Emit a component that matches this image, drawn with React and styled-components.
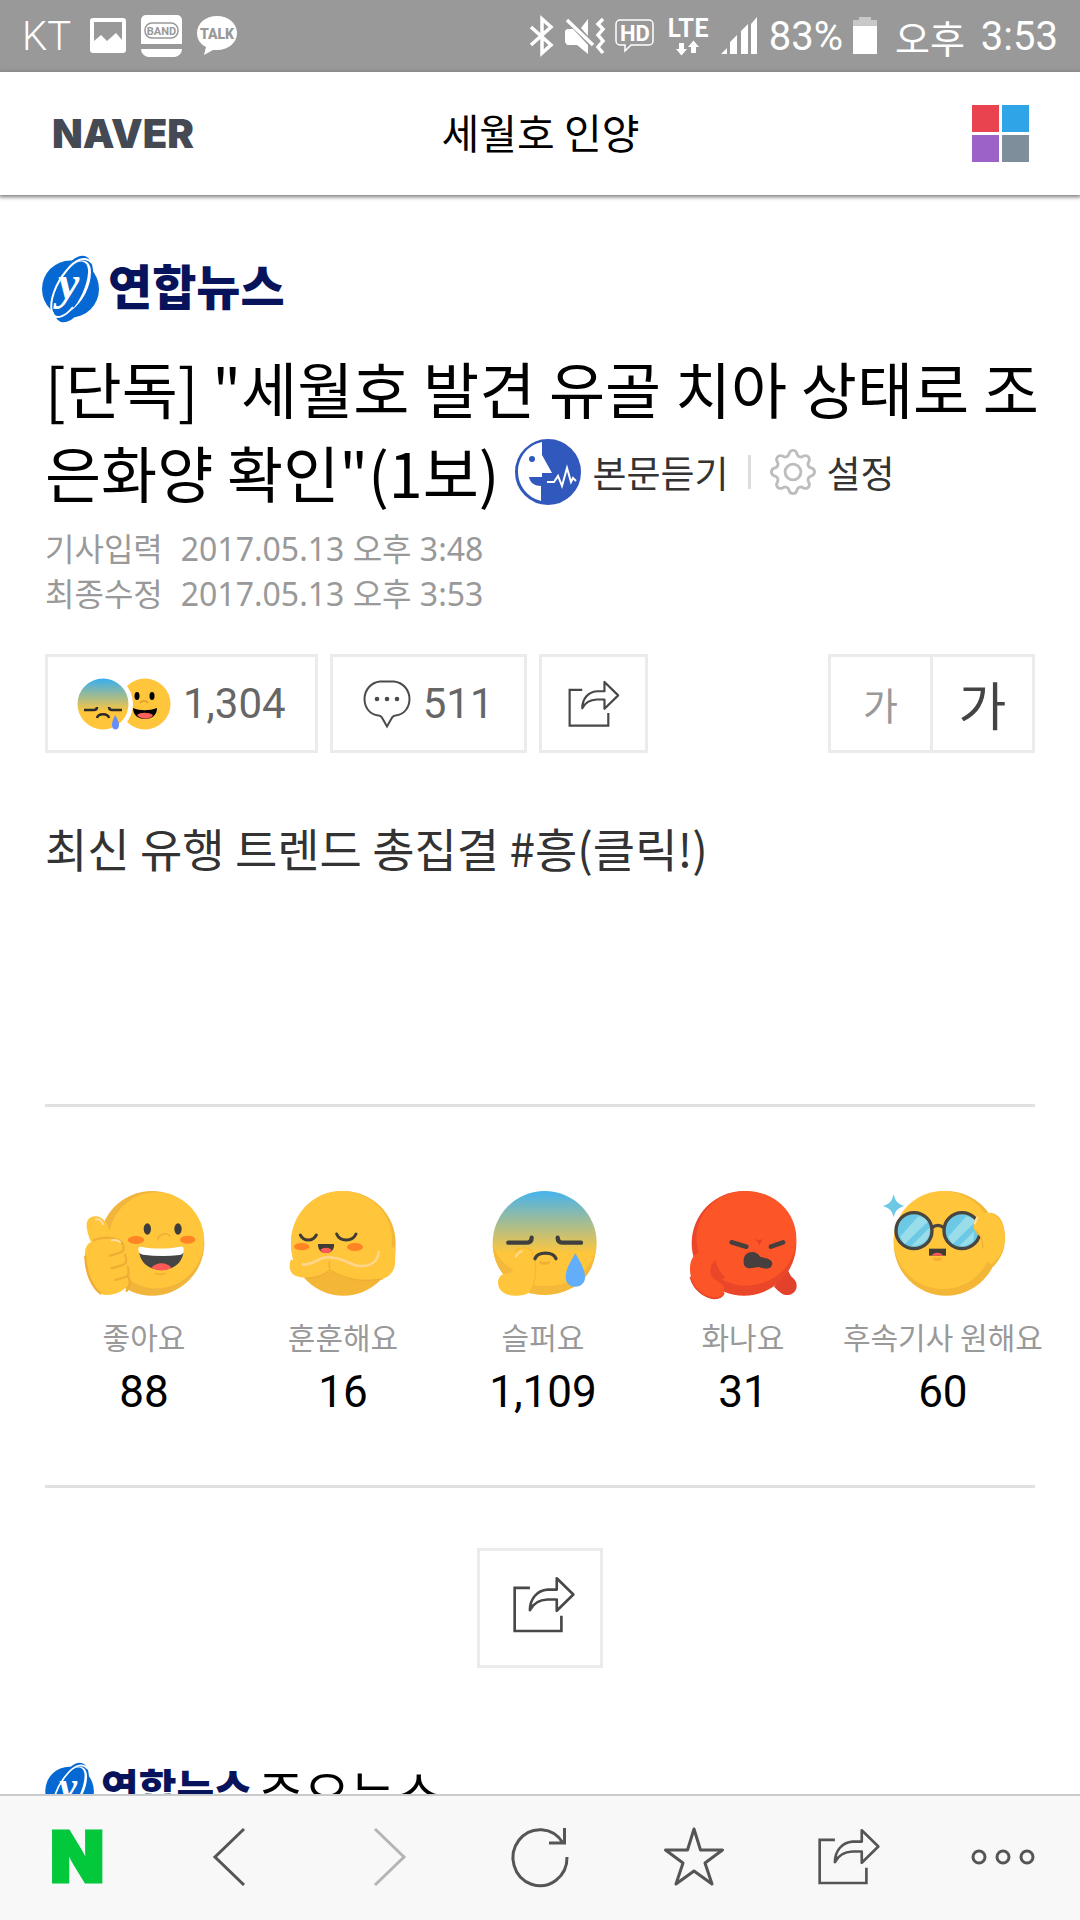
import React from "react";
import styled, { createGlobalStyle } from "styled-components";
import { BsGear } from "react-icons/bs";

const GlobalStyle = createGlobalStyle`
    * {
        box-sizing: border-box;
    }
    body {
        margin: 0;
        background: #fff;
        color: #000;
        font-family: "Noto Sans CJK KR", "Noto Sans", sans-serif;
    }
    button {
        font: inherit;
        color: inherit;
        background: none;
        border: 0;
        padding: 0;
        cursor: pointer;
    }
    a {
        color: inherit;
        text-decoration: none;
    }
    h1, h2, p, ul, dl, dd {
        margin: 0;
        padding: 0;
        font-weight: 400;
    }
    svg {
        display: block;
        flex: none;
        overflow: visible;
    }
`;

/* ---------- status bar icons ---------- */

const PictureIcon = () => (
    <svg width="36" height="36" viewBox="0 0 36 36">
        <path
            fill="#fff"
            fillRule="evenodd"
            d="M3 0h30a3 3 0 0 1 3 3v29a3 3 0 0 1-3 3H3a3 3 0 0 1-3-3V3a3 3 0 0 1 3-3Zm1 4v19l7-6 6 6 9-8 6 7V4Z"
        />
    </svg>
);

const BandIcon = () => (
    <svg width="41" height="42" viewBox="0 0 41 42">
        <path fill="#fff" d="M5 0h31a5 5 0 0 1 5 5v24H0V5a5 5 0 0 1 5-5ZM0 34h41a8 8 0 0 1-7 8H7a8 8 0 0 1-7-8Z" />
        <rect x="4" y="8" width="33" height="15" rx="7" fill="none" stroke="#999" strokeWidth="1.5" />
        <text x="20.5" y="19.5" textAnchor="middle" fill="#999" fontFamily="Roboto" fontWeight="700" fontSize="11">
            BAND
        </text>
    </svg>
);

const TalkIcon = () => (
    <svg width="40" height="40" viewBox="0 0 40 40">
        <path fill="#fff" d="M20 0c11 0 20 7 20 17s-9 17-20 17h-4l-9 5 2-8C3 28 0 23 0 17 0 7 9 0 20 0Z" />
        <text x="20" y="22.5" textAnchor="middle" fill="#999" fontFamily="Roboto" fontWeight="900" fontSize="14">
            TALK
        </text>
    </svg>
);

const BluetoothIcon = () => (
    <svg width="26" height="40" viewBox="0 0 26 40" fill="none" stroke="#fff" strokeWidth="3.5">
        <path d="m2 11 20 18-9 8V3l9 8L2 29" />
    </svg>
);

const MuteIcon = () => (
    <svg width="40" height="38" viewBox="0 0 40 38">
        <path fill="#fff" d="M2 12h6l15 16v9l-11-9H2l-2-3V14ZM16 11l7-9v17Z" />
        <path d="M2 3l26 25M38 2l-5 5 5 5-5 6 5 6-5 6 5 6" fill="none" stroke="#fff" strokeWidth="3.5" />
    </svg>
);

const HdIcon = () => (
    <svg width="40" height="36" viewBox="0 0 40 36">
        <path
            d="M5 2h29a4 4 0 0 1 4 4v17a4 4 0 0 1-4 4H16l-6 6v-6H5a4 4 0 0 1-4-4V6a4 4 0 0 1 4-4Z"
            fill="none"
            stroke="#fff"
            strokeWidth="1.5"
        />
        <text x="20" y="22.5" textAnchor="middle" fill="#fff" fontFamily="Roboto" fontWeight="700" fontSize="22">
            HD
        </text>
    </svg>
);

const LteIcon = () => (
    <svg width="46" height="42" viewBox="0 0 46 42">
        <text x="23" y="22" textAnchor="middle" fill="#fff" fontFamily="Lato" fontWeight="700" fontSize="26">
            LTE
        </text>
        <path fill="#fff" d="M14 28h5v6h3l-5.500 6.500L11 34h3ZM26 38v-6h-3l5.500-6.500L34 32h-3v6Z" />
    </svg>
);

const SignalIcon = () => (
    <svg width="38" height="38" viewBox="0 0 38 38" fill="#fff">
        <path d="M0 37l6-6v6ZM9 37V25l7-7v19ZM20 37V14l7-7v30ZM30 37V7l6-7v37Z" />
    </svg>
);

const BatteryIcon = () => (
    <svg width="24" height="38" viewBox="0 0 24 38">
        <path fill="#c8c8c8" d="M6 0h12v3h6v7H0V3h6Z" />
        <path fill="#fff" d="M0 9h24v28H0Z" />
    </svg>
);

/* ---------- page icons ---------- */

const Globe = ({ width = 58, height = 68 }) => (
    <svg width={width} height={height} viewBox="0 0 58 68">
        <circle cx="28.500" cy="34" r="28.500" fill="#0568d3" />
        <ellipse cx="31" cy="34" rx="17" ry="35" transform="rotate(21 31 34)" fill="#0568d3" />
        <path
            d="M50 8C43 0 33 5 25 15 13 29 7 47 10 57c3 9 13 5 21-5"
            fill="none"
            stroke="#fff"
            strokeWidth="2"
        />
        <path d="M32 9c7-5 15-3 14 9-1 13-8 28-17 38 12-9 20-25 20-39 0-11-8-15-17-8Z" fill="#fff" />
        <text x="16" y="44" fill="#fff" fontFamily="Liberation Serif" fontStyle="italic" fontWeight="700" fontSize="48">
            y
        </text>
    </svg>
);

const SpeakIcon = () => (
    <svg width="66" height="66" viewBox="0 0 66 66">
        <circle cx="33" cy="33" r="32" fill="#3158bd" stroke="#3158bd" strokeWidth="2" />
        <path d="M27 3v13l10 18H27v4H14c1 6 6 9 12 9v15A30 30 0 0 1 3 33C3 18 13 6 27 3Z" fill="#fff" />
        <circle cx="17" cy="20" r="3" fill="#3158bd" />
        <path d="M32 43h7l4-6 4 10 5-18 4 14 2-4 3 3" fill="none" stroke="#fff" strokeWidth="2" />
    </svg>
);

const BubbleIcon = () => (
    <svg width="48" height="48" viewBox="0 0 48 48">
        <path
            d="M17 1.500h14c9 1 15 8 15.500 17 0 9-5 16-14 17-2 0-3 1-4 3l-4.500 8-4.500-8c-1-2-2-3-4-3-9-1-14-8-14-17 .5-9 6.500-16 15.500-17Z"
            fill="none"
            stroke="#4b4b4b"
            strokeWidth="2"
        />
        <g fill="#4b4b4b">
            <circle cx="14" cy="19" r="2.300" />
            <circle cx="24" cy="19" r="2.300" />
            <circle cx="34" cy="19" r="2.300" />
        </g>
    </svg>
);

const ShareIcon = ({ width = 63, height = 58, color = "#484848" }) => (
    <svg width={width} height={height} viewBox="155 345 190 175" fill="none" stroke={color} strokeWidth="8">
        <path d="M209 381h-46v130h141v-46" />
        <path
            d="M290 352l50 49-50 49v-34h-28c-27 1-44 14-53 32 0-33 21-60 53-62h28Z"
            strokeLinejoin="round"
        />
    </svg>
);

const MiniFaces = () => (
    <svg width="94" height="52" viewBox="0 0 94 52">
        <defs>
            <linearGradient id="mini-sad" x1="0" y1="0" x2="0" y2="1">
                <stop offset="0" stopColor="#35aef0" />
                <stop offset=".65" stopColor="#ffc63c" />
            </linearGradient>
        </defs>
        <circle cx="68" cy="26" r="25.500" fill="#ffc63c" />
        <ellipse cx="60" cy="18" rx="2.500" ry="4" />
        <ellipse cx="75" cy="18" rx="2.500" ry="4" />
        <path d="M63 25c2-3 6-3 8 0" fill="none" stroke="#e09a28" strokeWidth="1.500" />
        <path d="M56 30c7 3 16 3 24 0 0 7-5 11-12 11s-12-4-12-11Z" />
        <path d="M60 37c3-3 12-3 16 0-3 5-12 5-16 0Z" fill="#ff5f5a" />
        <circle cx="26" cy="26" r="30" fill="#fff" />
        <circle cx="26" cy="26" r="25.500" fill="url(#mini-sad)" />
        <path
            d="M7 32h10c2 0 3-1 3-3M45 32H35c-2 0-3-1-3-3M20 40c1-5 11-5 12 0"
            fill="none"
            stroke="#2b2b2b"
            strokeWidth="2.500"
        />
        <path d="M38 37c3 5 4 7 4 10 0 6-7 6-7 0 0-3 1-5 3-10Z" fill="#638cff" />
    </svg>
);

/* ---------- reaction faces ---------- */

const LikeFace = () => (
    <svg width="130" height="110" viewBox="57 90 390 330">
        <circle cx="276" cy="250" r="157" fill="#f0b53a" />
        <ellipse cx="289" cy="241" rx="143" ry="144" fill="#ffc63c" />
        <path
            d="M80 200c-2-20 10-33 28-31 25 2 38 25 46 66 25-3 40 4 42 20 10 10 10 25 5 37 8 12 8 25 3 37 10 15 8 40-5 53-15 13-35 24-60 23-20-1-30-10-42-30-15-25-25-60-22-100 2-15 8-24 18-28-6-15-12-32-13-47Z"
            fill="#ffc63c"
        />
        <g fill="none" stroke="#f0ae35" strokeWidth="7" strokeLinecap="round">
            <path d="M102 240c25-8 55-10 76 1 12 6 15 20 12 30-7 9-25 12-41 16" />
            <path d="M195 284c5 14 5 22 0 27-10 8-25 9-40 14M203 320c4 12 4 20 0 27-9 8-24 8-38 13" />
            <path d="M76 290c2 50 20 90 45 110M205 350c7 15 5 30-5 42" />
        </g>
        <path d="M108 178c10-1 18 6 21 15M155 241c12-2 20 0 25 5" fill="none" stroke="#ffdca0" strokeWidth="6" strokeLinecap="round" />
        <ellipse cx="262" cy="207" rx="11" ry="17" fill="#3d3d3d" />
        <ellipse cx="354" cy="207" rx="11" ry="17" fill="#3d3d3d" />
        <ellipse cx="228" cy="240" rx="25" ry="12" fill="#ff8424" />
        <ellipse cx="383" cy="239" rx="23" ry="12" fill="#ff8424" />
        <path d="M293 239c5-19 28-23 37-10M286 340c11 4 21 4 32 0" fill="none" stroke="#efae34" strokeWidth="5" />
        <path d="M238 280h132c-5 30-30 50-66 50s-61-20-66-50Z" fill="#454545" />
        <path d="M274 323c15-18 47-18 60 0-15 11-43 11-60 0Z" fill="#ff5a55" />
        <path d="M235 268c0-8 5-9 11-7 38 7 76 6 115-1 7-1 10 2 10 8 0 11-3 16-12 17-38 5-74 4-110-1-10-2-14-7-14-16Z" fill="#fff" />
    </svg>
);

const WarmFace = () => (
    <svg width="130" height="110" viewBox="653 90 390 330">
        <circle cx="849" cy="250" r="157" fill="#f4b637" />
        <path
            d="M692 250c0-87 66-157 152-157 80 0 144 60 150 130 4 50-10 90-35 130l-110-15-140-10c-10-20-17-48-17-78Z"
            fill="#ffc63c"
        />
        <path
            d="M692 298c-8 20-5 38 10 48 30 15 78 5 103-15 15-15 5-35-15-36-40 0-50 35-98 3Z"
            fill="#ffc63c"
        />
        <path
            d="M808 300c-4 20 3 32 18 40 45 25 120 28 155 10 15-10 23-25 23-40l2-50-45 10c-10 40-35 50-70 45-35-8-50-25-83-15Z"
            fill="#ffc63c"
        />
        <path d="M735 355c30 0 58-10 73-25 50 30 105 38 160 26" fill="none" stroke="#efae34" strokeWidth="4" />
        <path d="M728 314c38 2 52-32 92-20 38 2 50 26 86 24 31-1 47-18 49-42" fill="none" stroke="#ffd58c" strokeWidth="8" strokeLinecap="round" />
        <path d="M808 303c-2 10-3 15 0 23" fill="none" stroke="#f0b13a" strokeWidth="5" />
        <path d="M720 225c10 20 38 20 48 0M829 222c10 24 47 24 58 0" fill="none" stroke="#403c36" strokeWidth="9" strokeLinecap="round" />
        <ellipse cx="724" cy="260" rx="23" ry="11" fill="#ff8424" />
        <ellipse cx="884" cy="261" rx="24" ry="12" fill="#ff8424" />
        <path d="M773 252h48c2 14-7 27-24 27s-25-13-24-27Z" fill="#403c36" />
        <path d="M780 270c8-9 26-9 34 0-8 13-26 13-34 0Z" fill="#ff5a55" />
    </svg>
);

const SadFace = () => (
    <svg width="130" height="110" viewBox="112 90 390 330">
        <defs>
            <linearGradient id="sad" x1="0" y1="0" x2="0" y2="1">
                <stop offset="0" stopColor="#45b3ee" />
                <stop offset=".6" stopColor="#ffc63c" />
            </linearGradient>
        </defs>
        <ellipse cx="312" cy="249" rx="156" ry="156" fill="url(#sad)" />
        <path d="M156 255c3 50 25 85 42 95 10 0 18-8 20-22-25-10-50-40-62-73Z" fill="#f4b93a" />
        <path d="M465 272c-15 60-70 103-142 106-20 0-35-1-45-4l-12 25c90 20 190-20 199-127Z" fill="#f4b93a" />
        <path d="M218 325c-10-35 8-62 35-62 25 0 33 22 33 55 0 40-8 75-30 85-28 8-60 6-76-12-15-20-8-50 15-50 12 0 22-3 23-16Z" fill="#ffc63c" />
        <path d="M223 273c10-10 35-14 47-3 20 25 20 90-3 130" fill="none" stroke="#f5b936" strokeWidth="4" />
        <path d="M225 290c4-9 9-13 18-16" fill="none" stroke="#ffdf9e" strokeWidth="6" strokeLinecap="round" />
        <path d="M203 248h53c12 0 17-5 17-15M421 248h-53c-12 0-17-5-17-15" fill="none" stroke="#403f3c" strokeWidth="13" strokeLinecap="round" />
        <path d="M283 296c8-22 55-22 63 0" fill="none" stroke="#403f3c" strokeWidth="10" strokeLinecap="round" />
        <path d="M299 307c8 4 18 4 26 0" fill="none" stroke="#efb032" strokeWidth="8" strokeLinecap="round" />
        <path d="M404 280c17 30 29 48 29 72 0 38-58 38-58 0 0-24 12-42 29-72Z" fill="#62aefa" />
    </svg>
);

const AngryFace = () => (
    <svg width="130" height="110" viewBox="715 90 390 330">
        <path d="M1003 380c15 15 25 25 38 25 18 0 30-12 30-28 0-15-8-20-18-30l-10-20Z" fill="#e4412c" />
        <circle cx="913" cy="250" r="157" fill="#ea4629" />
        <ellipse cx="920" cy="235" rx="150" ry="142" fill="#fb5528" />
        <path d="M765 285c15-12 50-14 62 15-15 10-16 40-5 53 10 15 32 15 32 38 0 15-10 26-30 26-40-3-72-45-73-88 0-20 4-33 14-44Z" fill="#fb5528" />
        <path d="M828 300c-25 15-20 60 10 60 8 0 15-2 17-8-15-15-24-32-27-52Z" fill="#ea4629" />
        <path d="M752 350c10 38 40 62 72 65 15 0 25-6 29-16" fill="none" stroke="#ea4629" strokeWidth="5" />
        <path d="M947 237c10 4 15 4 25-1-8 8-9 12-13 20-4-9-6-13-12-19Z" fill="#e4412c" />
        <path d="M876 247l44 13M1030 247l-36 13" stroke="#463f3d" strokeWidth="14" strokeLinecap="round" />
        <path d="M912 305c-2-35 40-36 49-15 18 6 34 5 37 20-2 22-25 16-42 11-18 3-44 11-44-16Z" fill="#463f3d" />
    </svg>
);

const WantFace = () => (
    <svg width="130" height="110" viewBox="237 90 390 330">
        <path d="M570 158c32 0 48 32 48 77 0 35-12 60-35 85l-60-40Z" fill="#f4b637" />
        <circle cx="441" cy="250" r="157" fill="#f4b637" />
        <ellipse cx="432" cy="240" rx="148" ry="147" fill="#ffc63c" />
        <path d="M284 102c5 22 12 30 32 36-20 6-27 14-32 34-5-20-12-28-33-34 21-6 28-14 33-36Z" fill="#6cc9e5" />
        <g stroke="#4a463f" strokeWidth="10" fill="#6cc9e5">
            <circle cx="345" cy="212" r="54" />
            <circle cx="489" cy="212" r="54" />
            <path d="M399 203c10-9 25-9 35 0" fill="none" />
        </g>
        <path d="M303 230l55-61c13 2 21 7 28 16l-69 67ZM337 258l54-55c2 18-2 30-10 38-10 10-25 18-44 17ZM447 230l55-61c13 2 21 7 28 16l-69 67ZM481 258l45-45-3 30c-10 10-25 16-42 15Z" fill="#98dde9" />
        <path d="M528 180c10-18 30-25 48-20 28 10 42 40 41 75-1 35-15 60-39 78-25-10-34-40-27-63 2-10-4-20-13-25-14-12-18-27-10-45Z" fill="#ffc63c" />
        <path d="M529 212c13 9 25 28 22 54" fill="none" stroke="#f0b136" strokeWidth="4" />
        <path d="M528 190c0-8 3-12 7-17" fill="none" stroke="#ffdf9e" strokeWidth="7" strokeLinecap="round" />
        <path d="M390 266h51v21h-51Z" fill="#403c36" />
        <path d="M398 287c4-12 30-12 34 0Z" fill="#ff5a55" />
        <path d="M400 293h31l-5 9h-20Z" fill="#f5ad32" />
    </svg>
);

const reactions = [
    { label: "좋아요", count: "88", Face: LikeFace },
    { label: "훈훈해요", count: "16", Face: WarmFace },
    { label: "슬퍼요", count: "1,109", Face: SadFace },
    { label: "화나요", count: "31", Face: AngryFace },
    { label: "후속기사 원해요", count: "60", Face: WantFace },
];

const StatusBar = () => (
    <StatusWrapper>
        <div className="group">
            <span className="carrier">KT</span>
            <PictureIcon />
            <BandIcon />
            <TalkIcon />
        </div>
        <div className="group tight">
            <BluetoothIcon />
            <MuteIcon />
            <HdIcon />
            <LteIcon />
            <SignalIcon />
            <span>83%</span>
            <BatteryIcon />
            <span className="clock">
                <span className="korean">오후</span>3:53
            </span>
        </div>
    </StatusWrapper>
);

const BrowserBar = () => (
    <BrowserWrapper>
        <NaverHome href="#home" aria-label="네이버 홈">
            N
        </NaverHome>
        <button aria-label="뒤로">
            <svg width="60" height="60" viewBox="0 0 60 60" fill="none" stroke="#555" strokeWidth="3">
                <path d="M43 2L14 30l29 28" />
            </svg>
        </button>
        <button aria-label="앞으로">
            <svg width="60" height="60" viewBox="0 0 60 60" fill="none" stroke="#b5b5b5" strokeWidth="3">
                <path d="M19 2l29 28-29 28" />
            </svg>
        </button>
        <button aria-label="새로고침">
            <svg width="60" height="60" viewBox="0 0 60 60" fill="none" stroke="#555" strokeWidth="3">
                <path d="M57 30A27 28 0 1 1 53 16M54.500 1v15H39" />
            </svg>
        </button>
        <button aria-label="즐겨찾기">
            <svg width="60" height="60" viewBox="0 0 60 60" fill="none" stroke="#555" strokeWidth="3" strokeLinejoin="round">
                <path d="M30 2l6.500 21H58.500L41 36l7 21-18-13-18 13 7-21L1.500 23h22Z" />
            </svg>
        </button>
        <button aria-label="공유">
            <ShareIcon color="#555" />
        </button>
        <button aria-label="더보기">
            <svg width="64" height="20" viewBox="0 0 64 20" fill="none" stroke="#555" strokeWidth="3">
                <circle cx="8" cy="10" r="6" />
                <circle cx="32" cy="10" r="6" />
                <circle cx="56" cy="10" r="6" />
            </svg>
        </button>
    </BrowserWrapper>
);

const App = () => {
    return (
        <Screen>
            <GlobalStyle />
            <StatusBar />
            <Header>
                <NaverLogo href="#naver">NAVER</NaverLogo>
                <a className="topic" href="#topic">세월호 인양</a>
                <MenuButton aria-label="메뉴">
                    <i />
                    <i />
                    <i />
                    <i />
                </MenuButton>
            </Header>

            <Content>
                <Press href="#press">
                    <Globe />
                    <span>연합뉴스</span>
                </Press>
                <Headline>
                    <h1>[단독] "세월호 발견 유골 치아 상태로 조은화양 확인"(1보)</h1>
                    <Tools>
                        <button>
                            <SpeakIcon />
                            본문듣기
                        </button>
                        <span className="bar" />
                        <button>
                            <BsGear size={46} color="#bdbdbd" />
                            설정
                        </button>
                    </Tools>
                </Headline>
                <Dates>
                    <dt>기사입력</dt>
                    <dd>2017.05.13 오후 3:48</dd>
                    <dt>최종수정</dt>
                    <dd>2017.05.13 오후 3:53</dd>
                </Dates>

                <Toolbar>
                    <BoxButton>
                        <MiniFaces />
                        1,304
                    </BoxButton>
                    <BoxButton $pad={30}>
                        <BubbleIcon />
                        511
                    </BoxButton>
                    <BoxButton $pad={25} aria-label="공유">
                        <ShareIcon width={53} height={48} />
                    </BoxButton>
                    <FontSize>
                        <button className="small" aria-label="글자 작게">가</button>
                        <button className="large" aria-label="글자 크게">가</button>
                    </FontSize>
                </Toolbar>

                <Promo>
                    <a href="#trend">최신 유행 트렌드 총집결 #흥(클릭!)</a>
                </Promo>

                <Reactions>
                    {reactions.map(({ label, count, Face }) => (
                        <li key={label}>
                            <button>
                                <Face />
                                <span className="label">{label}</span>
                                <span className="count">{count}</span>
                            </button>
                        </li>
                    ))}
                </Reactions>

                <ShareBox aria-label="공유">
                    <ShareIcon />
                </ShareBox>

                <MoreNews>
                    <Press href="#press" $small>
                        <Globe width={50} height={58} />
                        <span>연합뉴스</span>
                    </Press>
                    주요뉴스
                </MoreNews>
            </Content>

            <BrowserBar />
        </Screen>
    );
};

export default App;

const Screen = styled.div`
    display: flex;
    flex-direction: column;
    height: 100vh;
`;

const StatusWrapper = styled.div`
    display: flex;
    justify-content: space-between;
    align-items: center;
    flex: none;
    height: 72px;
    padding: 0 22px;
    background: #999;
    color: #fff;
    font-family: Roboto, "Noto Sans CJK KR", sans-serif;
    font-size: 40px;
    .group {
        display: flex;
        align-items: center;
        gap: 15px;
    }
    .tight {
        gap: 10px;
    }
    .carrier {
        padding-right: 4px;
        font-weight: 300;
    }
    .clock {
        display: flex;
        align-items: center;
        gap: 16px;
        padding-left: 8px;
    }
    .korean {
        font-size: 38px;
    }
`;

const Header = styled.header`
    display: grid;
    grid-template-columns: 1fr auto 1fr;
    align-items: center;
    flex: none;
    height: 123px;
    padding: 0 51px 0 52px;
    background: #fff;
    box-shadow: 0 1px 4px 1px #777;
    z-index: 1;
    .topic {
        padding-bottom: 5px;
        font-size: 41px;
    }
`;

const NaverLogo = styled.a`
    color: #444953;
    font-family: Inter, sans-serif;
    font-size: 40px;
    font-weight: 900;
`;

const MenuButton = styled.button`
    justify-self: end;
    display: grid;
    grid-template-columns: 27px 27px;
    gap: 3px;
    i {
        height: 27px;
        background: #e8434f;
    }
    i:nth-child(2) {
        background: #2fa4e6;
    }
    i:nth-child(3) {
        background: #9d62c7;
    }
    i:nth-child(4) {
        background: #7f8e9b;
    }
`;

const Content = styled.main`
    flex: 1;
    min-height: 0;
    overflow: hidden;
    padding: 60px 45px 0;
`;

const Press = styled.a`
    display: flex;
    align-items: center;
    gap: ${({ $small }) => ($small ? 6 : 8)}px;
    margin-left: ${({ $small }) => ($small ? 0 : -3)}px;
    color: #07145c;
    font-size: ${({ $small }) => ($small ? 41 : 48)}px;
    font-weight: 900;
    line-height: 58px;
    span {
        padding-bottom: 10px;
    }
`;

const Headline = styled.div`
    margin: 23px -16px 0 0;
    font-size: 61px;
    line-height: 84px;
    h1 {
        display: inline;
        font-size: inherit;
    }
`;

const Tools = styled.div`
    display: inline-flex;
    align-items: center;
    gap: 19px;
    height: 84px;
    margin-left: 16px;
    vertical-align: top;
    color: #333;
    font-size: 37px;
    line-height: 66px;
    button {
        display: flex;
        align-items: center;
        gap: 11px;
    }
    .bar {
        width: 3px;
        height: 34px;
        background: #ddd;
    }
`;

const Dates = styled.dl`
    display: grid;
    grid-template-columns: auto 1fr;
    column-gap: 18px;
    margin-top: 12px;
    color: #999;
    font-family: "Noto Sans", "Noto Sans CJK KR", sans-serif;
    font-size: 32px;
    line-height: 45px;
`;

const Toolbar = styled.div`
    display: flex;
    gap: 12px;
    margin-top: 38px;
    font-family: Roboto, sans-serif;
    font-size: 42px;
`;

const BoxButton = styled.button`
    display: flex;
    align-items: center;
    gap: 12px;
    height: 99px;
    padding: 0 ${({ $pad = 29 }) => $pad}px;
    border: 3px solid #ebebeb;
    color: #666;
`;

const FontSize = styled.div`
    display: flex;
    margin-left: auto;
    border: 3px solid #ebebeb;
    font-family: "Noto Sans CJK KR", sans-serif;
    line-height: 93px;
    .small {
        width: 102px;
        border-right: 3px solid #ebebeb;
        color: #999;
        font-size: 38px;
    }
    .large {
        width: 99px;
        color: #444;
        font-size: 52px;
    }
`;

const Promo = styled.p`
    margin-top: 64px;
    padding-bottom: 227px;
    border-bottom: 3px solid #e0e0e0;
    color: #333;
    font-size: 46px;
    line-height: 60px;
`;

const Reactions = styled.ul`
    display: grid;
    grid-template-columns: 20% repeat(4, 20.2%);
    padding: 83px 0 67px;
    border-bottom: 3px solid #e0e0e0;
    list-style: none;
    li {
        display: flex;
        justify-content: center;
    }
    button {
        display: flex;
        flex-direction: column;
        align-items: center;
    }
    .label {
        margin-top: 16px;
        color: #999;
        font-size: 30px;
        line-height: 40px;
        white-space: nowrap;
    }
    .count {
        margin-top: 10px;
        font-family: Roboto, sans-serif;
        font-size: 44px;
        line-height: 52px;
    }
`;

const ShareBox = styled.button`
    display: flex;
    align-items: center;
    justify-content: center;
    width: 126px;
    height: 120px;
    margin: 60px auto 0;
    padding: 0 0 6px 6px;
    border: 3px solid #ebebeb;
`;

const MoreNews = styled.h2`
    display: flex;
    align-items: center;
    gap: 6px;
    margin-top: 88px;
    font-size: 50px;
    line-height: 70px;
`;

const BrowserWrapper = styled.nav`
    display: grid;
    grid-template-columns: repeat(7, 1fr);
    align-items: center;
    justify-items: center;
    flex: none;
    height: 126px;
    padding-bottom: 3px;
    border-top: 2px solid #c8cccc;
    background: #f8f8f8;
`;

const NaverHome = styled.a`
    color: #03c83c;
    font-family: Inter, sans-serif;
    font-size: 70px;
    font-weight: 900;
    line-height: 80px;
    -webkit-text-stroke: 3px #03c83c;
`;
